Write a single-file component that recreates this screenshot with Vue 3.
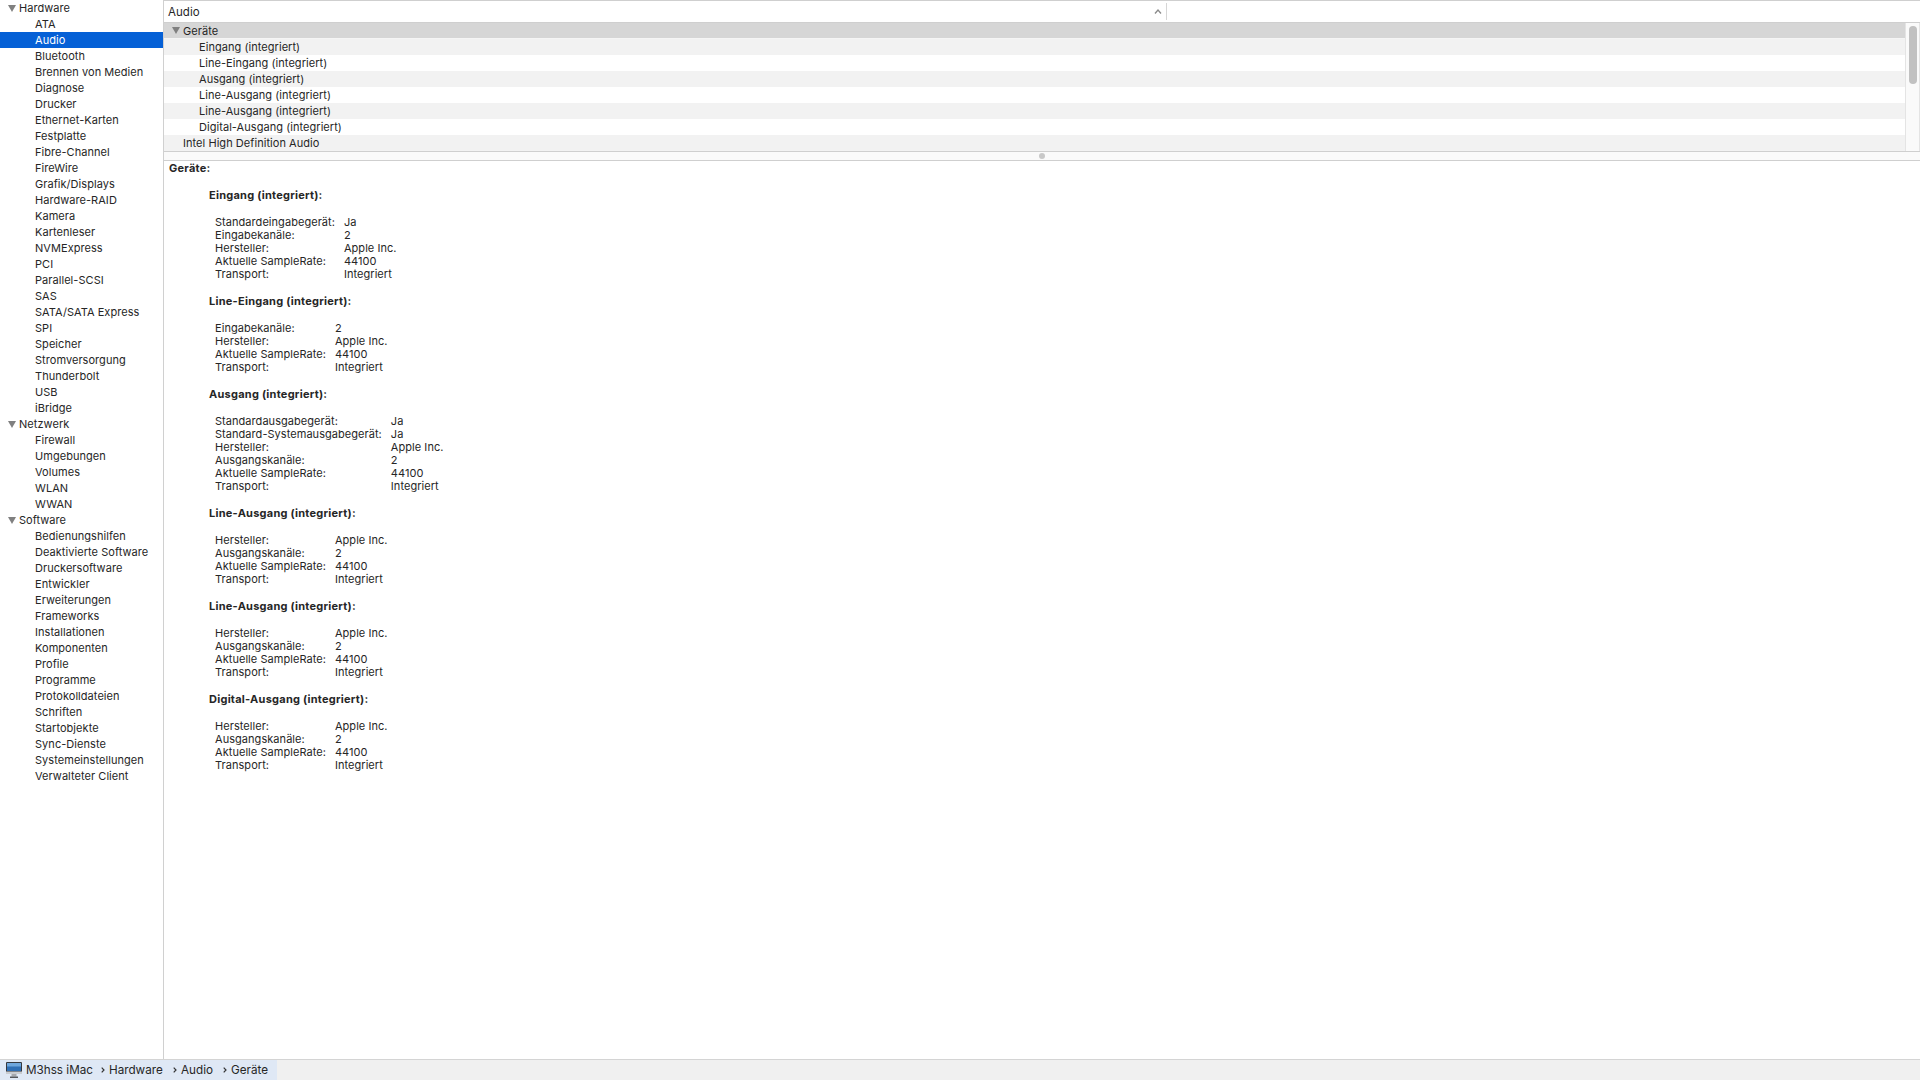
<template>
  <div class="app">
    <div class="columns">
      <aside class="sidebar">
        <template v-for="group in sidebar" :key="group.name">
          <div class="side-row side-group"><span class="tri"></span>{{ group.name }}</div>
          <div
            v-for="item in group.items"
            :key="item"
            class="side-row side-item"
            :class="{ selected: item === 'Audio' }"
          >{{ item }}</div>
        </template>
      </aside>

      <main class="main">
        <div class="table-head">
          <div class="head-cell">
            <span>Audio</span>
            <svg class="chevron" width="8" height="5" viewBox="0 0 8 5"><path d="M1 4.5 L4 1 L7 4.5" fill="none" stroke="#8a8a8a" stroke-width="1.3"/></svg>
          </div>
        </div>

        <div class="table-wrap">
          <div class="table-rows">
            <div class="row row-group"><span class="tri"></span>Geräte</div>
            <div v-for="(d, i) in tree" :key="i" class="row row-child" :class="{ odd: i % 2 === 0 }">{{ d }}</div>
            <div class="row row-top">Intel High Definition Audio</div>
          </div>
          <div class="scrollbar"><div class="thumb"></div></div>
        </div>

        <div class="splitter"><span class="dot"></span></div>

        <div class="detail">
          <div class="detail-title">Geräte:</div>
          <section v-for="(dev, i) in devices" :key="i" class="device">
            <div class="device-title">{{ dev.name }}:</div>
            <div class="props">
              <template v-for="p in dev.props" :key="p[0]">
                <div>{{ p[0] }}:</div>
                <div>{{ p[1] }}</div>
              </template>
            </div>
          </section>
        </div>
      </main>
    </div>

    <footer class="status">
      <div class="crumbs">
        <svg class="imac" width="16" height="16" viewBox="0 0 16 16">
          <rect x="0" y="0" width="16" height="11.5" rx="1" fill="#34383f"/>
          <rect x="1" y="1" width="14" height="8" fill="#2f6fb5"/>
          <rect x="1" y="1" width="14" height="3.5" fill="#6ea6dc"/>
          <rect x="0" y="9.5" width="16" height="2.5" fill="#c9ccd1"/>
          <rect x="5.5" y="12" width="5" height="2.5" fill="#a5a8ad"/>
          <rect x="4" y="14.5" width="8" height="1.5" fill="#55585e"/>
        </svg>
        <span class="crumb c1">M3hss iMac</span>
        <svg class="sep" width="4" height="6" viewBox="0 0 4 6"><path d="M0.7 0.6 L3 3 L0.7 5.4" fill="none" stroke="#333" stroke-width="1.2"/></svg>
        <span class="crumb c2">Hardware</span>
        <svg class="sep" width="4" height="6" viewBox="0 0 4 6"><path d="M0.7 0.6 L3 3 L0.7 5.4" fill="none" stroke="#333" stroke-width="1.2"/></svg>
        <span class="crumb c3">Audio</span>
        <svg class="sep" width="4" height="6" viewBox="0 0 4 6"><path d="M0.7 0.6 L3 3 L0.7 5.4" fill="none" stroke="#333" stroke-width="1.2"/></svg>
        <span class="crumb">Geräte</span>
      </div>
    </footer>
  </div>
</template>

<script setup>
const sidebar = [
  {
    name: 'Hardware',
    items: ['ATA', 'Audio', 'Bluetooth', 'Brennen von Medien', 'Diagnose', 'Drucker', 'Ethernet-Karten', 'Festplatte', 'Fibre-Channel', 'FireWire', 'Grafik/Displays', 'Hardware-RAID', 'Kamera', 'Kartenleser', 'NVMExpress', 'PCI', 'Parallel-SCSI', 'SAS', 'SATA/SATA Express', 'SPI', 'Speicher', 'Stromversorgung', 'Thunderbolt', 'USB', 'iBridge']
  },
  {
    name: 'Netzwerk',
    items: ['Firewall', 'Umgebungen', 'Volumes', 'WLAN', 'WWAN']
  },
  {
    name: 'Software',
    items: ['Bedienungshilfen', 'Deaktivierte Software', 'Druckersoftware', 'Entwickler', 'Erweiterungen', 'Frameworks', 'Installationen', 'Komponenten', 'Profile', 'Programme', 'Protokolldateien', 'Schriften', 'Startobjekte', 'Sync-Dienste', 'Systemeinstellungen', 'Verwalteter Client']
  }
]

const tree = [
  'Eingang (integriert)',
  'Line-Eingang (integriert)',
  'Ausgang (integriert)',
  'Line-Ausgang (integriert)',
  'Line-Ausgang (integriert)',
  'Digital-Ausgang (integriert)'
]

const common = (key) => [
  ['Hersteller', 'Apple Inc.'],
  [key, '2'],
  ['Aktuelle SampleRate', '44100'],
  ['Transport', 'Integriert']
]

const devices = [
  {
    name: 'Eingang (integriert)',
    props: [
      ['Standardeingabegerät', 'Ja'],
      ['Eingabekanäle', '2'],
      ['Hersteller', 'Apple Inc.'],
      ['Aktuelle SampleRate', '44100'],
      ['Transport', 'Integriert']
    ]
  },
  {
    name: 'Line-Eingang (integriert)',
    props: [
      ['Eingabekanäle', '2'],
      ['Hersteller', 'Apple Inc.'],
      ['Aktuelle SampleRate', '44100'],
      ['Transport', 'Integriert']
    ]
  },
  {
    name: 'Ausgang (integriert)',
    props: [
      ['Standardausgabegerät', 'Ja'],
      ['Standard-Systemausgabegerät', 'Ja'],
      ['Hersteller', 'Apple Inc.'],
      ['Ausgangskanäle', '2'],
      ['Aktuelle SampleRate', '44100'],
      ['Transport', 'Integriert']
    ]
  },
  { name: 'Line-Ausgang (integriert)', props: common('Ausgangskanäle') },
  { name: 'Line-Ausgang (integriert)', props: common('Ausgangskanäle') },
  { name: 'Digital-Ausgang (integriert)', props: common('Ausgangskanäle') }
]
</script>

<style>
html, body {
  margin: 0;
  background: #fff;
}
</style>

<style scoped>
.app {
  width: 1920px;
  height: 1080px;
  display: flex;
  flex-direction: column;
  overflow: hidden;
  font-family: Inter, "Liberation Sans", sans-serif;
  font-size: 11px;
  letter-spacing: 0.05px;
  color: #262626;
  background: #fff;
}

.columns {
  flex: 1;
  display: flex;
  min-height: 0;
}

.sidebar {
  width: 163px;
  flex: none;
  border-right: 1px solid #d0d0d0;
}

.side-row {
  height: 16px;
  line-height: 16px;
  white-space: nowrap;
}

.side-group {
  display: flex;
  align-items: center;
  padding-left: 8px;
}

.side-item {
  padding-left: 35px;
}

.side-item.selected {
  background: #0560d6;
  color: #fff;
}

.tri {
  width: 0;
  height: 0;
  border-left: 4.5px solid transparent;
  border-right: 4.5px solid transparent;
  border-top: 7.5px solid #808080;
  margin-right: 3px;
  flex: none;
}

.main {
  flex: 1;
  min-width: 0;
  display: flex;
  flex-direction: column;
}

.table-head {
  height: 21px;
  border-top: 1px solid #cfcfcf;
  border-bottom: 1px solid #cfcfcf;
  display: flex;
  align-items: center;
  padding-left: 4px;
  font-size: 11.5px;
}

.head-cell {
  width: 999px;
  height: 17px;
  display: flex;
  align-items: center;
  justify-content: space-between;
  border-right: 1px solid #d6d6d6;
  padding-right: 4px;
  box-sizing: border-box;
}

.chevron {
  flex: none;
}

.table-wrap {
  height: 128px;
  display: flex;
  border-bottom: 1px solid #cfcfcf;
}

.table-rows {
  flex: 1;
  min-width: 0;
}

.row {
  height: 16px;
  line-height: 16px;
  white-space: nowrap;
}

.row-group {
  background: #d6d6d6;
  display: flex;
  align-items: center;
  padding-left: 8px;
  border-bottom: 1px solid #f5f5f5;
  height: 15px;
}

.row-child {
  padding-left: 35px;
}

.row-child.odd,
.row-top {
  background: #f2f2f2;
}

.row-top {
  padding-left: 19px;
}

.scrollbar {
  width: 15px;
  flex: none;
  background: #fafafa;
  border-left: 1px solid #e4e4e4;
  border-right: 1px solid #e4e4e4;
  padding: 3px 0 0 3px;
  box-sizing: border-box;
}

.thumb {
  width: 8px;
  height: 58px;
  border-radius: 4px;
  background: #c1c1c1;
}

.splitter {
  height: 8px;
  background: #fafafa;
  border-bottom: 1px solid #cfcfcf;
  display: flex;
  align-items: center;
  justify-content: center;
}

.dot {
  width: 6px;
  height: 6px;
  background: #c8c8c8;
  border-radius: 50%;
}

.detail {
  flex: 1;
  padding-left: 5px;
  line-height: 13px;
}

.detail-title {
  font-weight: 700;
  letter-spacing: 0.25px;
  padding-top: 1px;
}

.device {
  padding-left: 40px;
  margin-top: 14px;
}

.device-title {
  font-weight: 700;
  letter-spacing: 0.25px;
  margin-bottom: 14px;
}

.props {
  display: grid;
  grid-template-columns: max-content max-content;
  column-gap: 9px;
  margin-left: 6px;
}

.status {
  height: 20px;
  flex: none;
  border-top: 1px solid #d4d4d4;
  background: #f0f0f0;
  display: flex;
  font-size: 11.7px;
  letter-spacing: 0;
}

.crumbs {
  width: 277px;
  height: 20px;
  line-height: 18px;
  background: #dfe8f5;
  display: flex;
  align-items: center;
  padding-left: 6px;
  box-sizing: border-box;
  white-space: nowrap;
}

.imac {
  margin-right: 4px;
  flex: none;
}

.crumb {
  flex: none;
}

.c1 {
  width: 67px;
}

.c2 {
  width: 54px;
}

.c3 {
  width: 32px;
}

.sep {
  flex: none;
  margin: 0 4px 0 8px;
}

.c2 + .sep {
  margin-left: 10px;
}

.c3 + .sep {
  margin-left: 10px;
}
</style>
